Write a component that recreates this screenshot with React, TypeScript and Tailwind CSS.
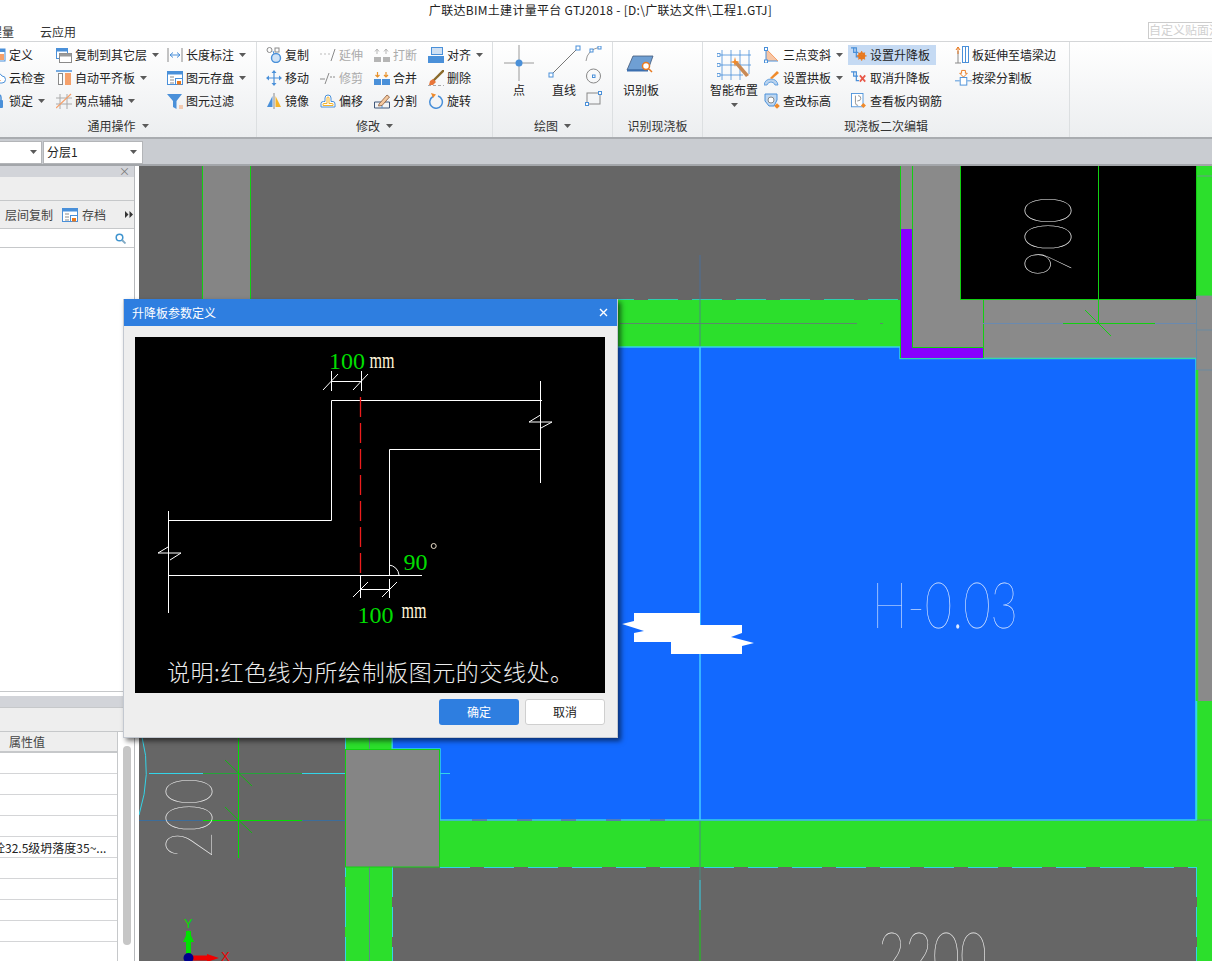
import React from "react";

const B = "#4a90d9";
const O = "#f5a06a";
const G = "#8a8a8a";

function S({ children, w = 16, h = 16, vb = "0 0 16 16", cls = "" }: { children: React.ReactNode; w?: number; h?: number; vb?: string; cls?: string }) {
  return (
    <svg width={w} height={h} viewBox={vb} fill="none" className={"shrink-0 " + cls}>
      {children}
    </svg>
  );
}

const Caret = ({ cls = "" }: { cls?: string }) => (
  <svg width="7" height="4" viewBox="0 0 7 4" className={"shrink-0 " + cls}>
    <path d="M0 0h7L3.5 4z" fill="#5a5a5a" />
  </svg>
);

const icons: Record<string, React.ReactNode> = {
  def: <S><rect x="1" y="2" width="14" height="12" fill="#fff" stroke={B} /><rect x="1" y="2" width="14" height="3" fill={B} /><rect x="9" y="7" width="5" height="6" fill={O} /></S>,
  cloud: <S><path d="M4 13a3 3 0 0 1-.5-6A4.5 4.5 0 0 1 12 6a3.5 3.5 0 0 1 0 7z" fill="#fff" stroke={B} /><path d="M8 6l3 5H5z" fill={O} /></S>,
  lock: <S><rect x="3" y="7" width="10" height="8" rx="1" fill={B} /><path d="M5 7V4.500a3 3 0 0 1 6 0V7" stroke={B} strokeWidth="1.500" /></S>,
  copyLayer: <S><rect x="0.500" y="1.500" width="11" height="10" fill="#fff" stroke={B} /><rect x="0.500" y="1.500" width="11" height="3" fill={B} /><rect x="3.500" y="6.500" width="12" height="9" fill="#fff" stroke={G} /><rect x="3.500" y="6.500" width="12" height="3" fill="#9a9a9a" /></S>,
  flush: <S><path d="M0 1h16" stroke={B} strokeWidth="1.500" /><rect x="2.500" y="3.500" width="4" height="11" fill="#fff" stroke={G} /><rect x="9" y="3" width="6" height="12" fill={O} /></S>,
  twoPt: <S><path d="M4 1v15M11 1v15M0 5h16M0 11h16" stroke="#aaa" /><path d="M0 15L15 1" stroke={O} strokeWidth="1.200" /></S>,
  length: <S><path d="M1 1v14M15 1v14" stroke={G} /><path d="M3 8h10M3 8l3-2.500M3 8l3 2.500M13 8l-3-2.500M13 8l-3 2.500" stroke={B} /></S>,
  saveEl: <S><rect x="0.500" y="1.500" width="15" height="13" fill="#fff" stroke={B} /><rect x="0.500" y="1.500" width="15" height="3" fill={B} /><path d="M3 7h4M3 10h4M3 13h4" stroke={G} /><rect x="8.500" y="8.500" width="7" height="6" fill="#fff" stroke={B} /><rect x="10" y="11" width="4" height="3.500" fill="#e8791f" /></S>,
  filter: <S><path d="M0 1h15L9.500 8v8L6 14V8z" fill={B} /><path d="M12 13h4M12 15h4" stroke={O} /></S>,
  copy: <S><circle cx="3.500" cy="3" r="2.500" stroke={G} /><rect x="9" y="1" width="4" height="4" stroke={G} /><circle cx="10" cy="11" r="4.500" fill="#cfe2f6" stroke={B} strokeWidth="1.400" /><path d="M7 4l1 3" stroke={B} /></S>,
  move: <S><path d="M8 1v14M1 8h14" stroke={B} strokeWidth="1.200" /><path d="M8 0l2.500 3h-5zM8 16l2.500-3h-5zM0 8l3-2.500v5zM16 8l-3-2.500v5z" fill={B} /></S>,
  mirror: <S><path d="M1 14L6.500 3v11z" fill={B} /><path d="M8 0v16" stroke={G} /><path d="M9.500 3L15 14H9.500z" fill="#f5b42a" /></S>,
  extend: <S><path d="M0 7h2M4 7h2M8 7h2" stroke="#bbb" /><path d="M11 14L15 2" stroke={G} /></S>,
  trim: <S><path d="M0 9h5M10 7h2M13 7h2" stroke={G} /><path d="M5 14L9 3" stroke={G} /></S>,
  offset: <S><path d="M1 14V10.500Q1 8.500 3.500 8.500H5V5Q5 2 8 2T11 5V8.500H13Q15 8.500 15 11V14z" fill="#fff" stroke={B} /><path d="M3 12.500V11Q3 10.500 4 10.500H7V5Q7 4 8 4T9 5V10.500H12.500Q13 10.500 13 11V12.500z" stroke="#f5b42a" /></S>,
  break: <S><rect x="0" y="10" width="7" height="5" fill="#b5b5b5" /><rect x="9" y="10" width="7" height="5" fill="#b5b5b5" /><path d="M3 2v5M1 4.500l2-2.500 2 2.500M12 2v5M10 4.500l2-2.500 2 2.500" stroke="#b5b5b5" /></S>,
  merge: <S><rect x="0" y="9" width="7" height="6" fill={B} /><rect x="8" y="9" width="8" height="6" fill={B} /><path d="M3.500 2v5M1.500 5l2 2 2-2M12 2v5M10 5l2 2 2-2" stroke="#e8912a" strokeWidth="1.200" /></S>,
  split: <S><path d="M0.500 15V9H15.500V15z" stroke="#41587a" /><path d="M8 15V12" stroke={B} /><path d="M5 11L13 2l2.500 2L8 12.500 4.500 13z" fill="#f4c9a0" stroke="#8a5a3a" strokeWidth=".8" /></S>,
  align: <S w={16} h={16}><rect x="3.500" y="0.500" width="11" height="7" fill="#cfe0f3" stroke={B} /><rect x="0" y="9" width="16" height="7" fill={B} /></S>,
  del: <S><path d="M16 0L5 11" stroke="#8a6a2a" strokeWidth="2.400" /><path d="M2 11l3-2 3 3-3 3H1z" fill="#e8763a" /><path d="M0 16h16" stroke="#333" strokeWidth=".8" strokeDasharray="3 2" /></S>,
  rotate: <S><path d="M5 3.500A6.300 6.300 0 1 0 10 3" stroke={B} strokeWidth="1.500" /><path d="M3 0l5 1.500-3 3.500z" fill="#f08a2a" /></S>,
  slope: <S><path d="M2 1v13h12z" fill="#f7c6a5" /><path d="M2 2v12h12" stroke={B} /><path d="M2 2l12 12" stroke={O} /><rect x="0.500" y="0.500" width="3" height="3" fill="#fff" stroke={B} /><rect x="0.500" y="13" width="3" height="3" fill="#fff" stroke={B} /></S>,
  arch: <S><path d="M0 15Q1 9 7 9T14 15H11Q10 12 7 12T3 15z" fill="#b8d2ee" stroke={B} strokeWidth=".8" /><path d="M6 8L13 1l2 2-7 6z" fill="#f08a2a" /></S>,
  check: <S><path d="M1 1h12v6L10 13H5L1 8z" fill="#bcd6f1" stroke={B} /><circle cx="7" cy="7" r="3" fill="#fff" stroke={G} /><rect x="11" y="11" width="4" height="4" fill="#f08a2a" transform="rotate(45 13 13)" /></S>,
  raise: <S w={16} h={16} vb="0 0 18 18"><path d="M0 1h3v5h3v5h3" stroke={B} strokeWidth="1.400" /><path d="M3 1h3v5h2" stroke={B} strokeWidth="1.400" /><circle cx="12" cy="10" r="4" fill="#e8791f" /><circle cx="12" cy="10" r="1.500" fill="#fff" /><path d="M12 4.500v11M6.500 10h11M8.200 6.200l7.600 7.600M15.800 6.200l-7.600 7.600" stroke="#e8791f" strokeWidth="1.200" /></S>,
  cancel: <S w={16} h={16} vb="0 0 18 18"><path d="M0 2h3v5h3v5h3" stroke={B} strokeWidth="1.400" /><path d="M3 2h3v5h2" stroke={B} strokeWidth="1.400" /><path d="M10 6l6 7M16 6l-6 7" stroke="#e8594a" strokeWidth="2" /></S>,
  rebar: <S w={16} h={16} vb="0 0 18 18"><rect x="0.500" y="0.500" width="13" height="15" fill="#fff" stroke={B} /><path d="M5 3v8q0 3 3 3M8 3q3 0 3 3T7 9" stroke={G} /><rect x="12" y="12" width="4" height="4" fill="#f08a2a" transform="rotate(45 14 14)" /></S>,
  extendWall: <S w={14} h={18} vb="0 0 14 18"><path d="M3 5v12M0 17h6" stroke={G} /><path d="M3 1v7M1 4l2-3 2 3" stroke="#e8791f" /><rect x="7.500" y="0.500" width="6" height="16" fill="#fff" stroke={B} /><path d="M10.500 1v15" stroke={B} /></S>,
  splitBeam: <S w={17} h={18} vb="0 0 18 18"><path d="M0 12h5M13 12h5" stroke={B} /><rect x="5.500" y="8.500" width="7" height="8" fill="#fff" stroke={B} /><path d="M7 1h4v3h2l-4 4-4-4h2z" fill="#fff" stroke="#e8791f" /></S>,
};

function Item({ icon, text, caret, off, hl, inner = "" }: { icon: string; text: string; caret?: boolean; off?: boolean; hl?: boolean; inner?: string }) {
  return (
    <div className="flex items-center h-[23px]">
      <div className={"flex items-center h-[20px] gap-[3px] whitespace-nowrap " + inner + (hl ? " bg-[#c5daf3]" : "")}>
        {icons[icon]}
        <span className={off ? "text-[#ababab]" : "text-[#222222]"}>{text}</span>
        {caret && <Caret cls="ml-[2px]" />}
      </div>
    </div>
  );
}

function Group({ cls, label, caret, children }: { cls: string; label: string; caret?: boolean; children: React.ReactNode }) {
  return (
    <div className={"flex flex-col shrink-0 h-full border-r border-[#dcdfe1] " + cls}>
      <div className="flex h-[74px] pt-[1px]">{children}</div>
      <div className="flex items-center justify-center gap-[6px] h-[20px] text-[#333333]">
        <span>{label}</span>
        {caret && <Caret />}
      </div>
    </div>
  );
}

function Ribbon() {
  return (
    <div className="flex h-[98px] -ml-[20px] w-[1232px] text-[12px] bg-gradient-to-b from-white to-[#eceef0] border-t border-[#d4d6d8] border-b-2 border-b-[#a9acb0] shrink-0">
      <Group cls="w-[277px]" label="通用操作" caret>
        <div className="w-[76px] pl-[10px]">
          <Item icon="def" text="定义" />
          <Item icon="cloud" text="云检查" />
          <Item icon="lock" text="锁定" caret />
        </div>
        <div className="w-[111px]">
          <Item icon="copyLayer" text="复制到其它层" caret />
          <Item icon="flush" text="自动平齐板" caret />
          <Item icon="twoPt" text="两点辅轴" caret />
        </div>
        <div>
          <Item icon="length" text="长度标注" caret />
          <Item icon="saveEl" text="图元存盘" caret />
          <Item icon="filter" text="图元过滤" />
        </div>
      </Group>
      <Group cls="w-[236px]" label="修改" caret>
        <div className="w-[63px] pl-[9px]">
          <Item icon="copy" text="复制" />
          <Item icon="move" text="移动" />
          <Item icon="mirror" text="镜像" />
        </div>
        <div className="w-[54px]">
          <Item icon="extend" text="延伸" off />
          <Item icon="trim" text="修剪" off />
          <Item icon="offset" text="偏移" />
        </div>
        <div className="w-[54px]">
          <Item icon="break" text="打断" off />
          <Item icon="merge" text="合并" />
          <Item icon="split" text="分割" />
        </div>
        <div>
          <Item icon="align" text="对齐" caret />
          <Item icon="del" text="删除" />
          <Item icon="rotate" text="旋转" />
        </div>
      </Group>
      <Group cls="w-[120px]" label="绘图" caret>
        <div className="w-[52px] flex flex-col items-center pt-[2px]">
          <S w={30} h={36} vb="0 0 30 36">
            <path d="M15 0v36M0 18h30" stroke="#9a9a9a" />
            <circle cx="15" cy="18" r="3.500" fill={B} />
          </S>
          <span className="-mt-[1px] h-[20px] leading-[20px] text-[#222222]">点</span>
        </div>
        <div className="w-[38px] flex flex-col items-center pt-[2px]">
          <S w={33} h={36} vb="0 0 33 36">
            <path d="M3 30L30 3" stroke="#777777" />
            <rect x="1" y="28" width="4" height="4" fill="#fff" stroke={B} />
            <rect x="28" y="1" width="4" height="4" fill="#fff" stroke={B} />
          </S>
          <span className="-mt-[1px] h-[20px] leading-[20px] text-[#222222]">直线</span>
        </div>
        <div className="flex flex-col ml-[2px] gap-[6px] pt-[3px]">
          <S w={17} h={16} vb="0 0 17 16">
            <path d="M1 15Q2 4 15 1" stroke="#999" />
            <rect x="5" y="3" width="3" height="3" fill="#fff" stroke={B} />
            <rect x="13" y="0" width="3" height="3" fill="#fff" stroke={B} />
          </S>
          <S w={17} h={16} vb="0 0 17 16">
            <circle cx="8.500" cy="8" r="7" stroke="#888" />
            <rect x="7.500" y="7" width="2.500" height="2.500" fill="#fff" stroke={B} />
          </S>
          <S w={17} h={16} vb="0 0 17 16">
            <rect x="2" y="3" width="13" height="11" stroke="#888" />
            <rect x="0.500" y="12.500" width="3" height="3" fill="#fff" stroke={B} />
            <rect x="13.500" y="1.500" width="3" height="3" fill="#fff" stroke={B} />
          </S>
        </div>
      </Group>
      <Group cls="w-[90px]" label="识别现浇板">
        <div className="w-[56px] flex flex-col items-center pt-[2px]">
          <S w={30} h={36} vb="0 0 30 36">
            <path d="M7 11h20l-5 14H1z" fill="#6f9fd3" stroke="#41587a" strokeWidth=".8" />
            <path d="M1 25.500h21" stroke="#3b6fb0" strokeWidth="2" />
            <circle cx="20" cy="21" r="3.500" fill="#fff" stroke="#e8791f" strokeWidth="1.500" />
            <path d="M23 24l3 3" stroke="#e8791f" strokeWidth="1.500" />
          </S>
          <span className="-mt-[1px] h-[20px] leading-[20px] text-[#222222]">识别板</span>
        </div>
      </Group>
      <Group cls="w-[367px]" label="现浇板二次编辑">
        <div className="ml-[7px] w-[48px] flex flex-col items-center pt-[2px]">
          <S w={34} h={36} vb="0 0 34 36">
            <path d="M5 5v30M14 5v30M23 5v30M32 5v24M0 10h34M0 20h34M0 30h26" stroke={B} strokeWidth=".8" />
            <path d="M17 18L29 32l3-2L20 16z" fill="#c98a55" />
            <path d="M17 16l1-4 1 4 4 1-4 1-1 4-1-4-4-1z" fill="#f08a2a" />
            <rect x="0" y="8.500" width="3" height="3" fill="#fff" stroke={B} strokeWidth=".8" />
            <rect x="0" y="18.500" width="3" height="3" fill="#fff" stroke={B} strokeWidth=".8" />
            <rect x="0" y="28.500" width="3" height="3" fill="#fff" stroke={B} strokeWidth=".8" />
          </S>
          <span className="-mt-[1px] h-[20px] leading-[20px] whitespace-nowrap text-[#222222]">智能布置</span>
          <Caret cls="mt-[3px]" />
        </div>
        <div className="w-[84px] ml-[6px]">
          <Item icon="slope" text="三点变斜" caret />
          <Item icon="arch" text="设置拱板" caret />
          <Item icon="check" text="查改标高" />
        </div>
        <div className="w-[107px]">
          <Item icon="raise" text="设置升降板" hl inner="pl-[3px] pr-[6px]" />
          <Item icon="cancel" text="取消升降板" inner="pl-[3px]" />
          <Item icon="rebar" text="查看板内钢筋" inner="pl-[3px]" />
        </div>
        <div>
          <Item icon="extendWall" text="板延伸至墙梁边" />
          <Item icon="splitBeam" text="按梁分割板" inner="!gap-0" />
        </div>
      </Group>
    </div>
  );
}

function Selects() {
  return (
    <div className="flex items-center gap-[1px] h-[27px] bg-[#c9ccd1] border-b-2 border-b-[#a3a6aa] text-[12px] pt-[1px] shrink-0">
      <div className="flex items-center justify-end w-[42px] h-[23px] bg-white border border-l-0 border-[#b3b5b8] pr-[4px]">
        <Caret />
      </div>
      <div className="flex items-center justify-between w-[100px] h-[23px] bg-white border border-[#b3b5b8] px-[3px] pr-[5px] text-[#222222]">
        <span>分层1</span>
        <Caret />
      </div>
    </div>
  );
}

function LeftPanel() {
  return (
    <div className="flex flex-col w-[139px] shrink-0 h-full bg-white text-[12px]">
      <div className="flex flex-col w-[135px] h-full border-r border-[#b7b9bc]">
        <div className="flex items-center justify-end h-[11px] bg-[#d2d4d9] pr-[4px] text-[#777777] text-[11px] leading-none">
          ×
        </div>
        <div className="h-[24px] bg-[#eeeeee] border-b border-[#c6c8ca]" />
        <div className="flex items-center h-[28px] bg-[#eeeeee] border-b border-[#c6c8ca] pl-[5px] text-[#444444] whitespace-nowrap">
          <span>层间复制</span>
          <span className="ml-[9px] mr-[4px]">{icons.saveEl}</span>
          <span>存档</span>
          <svg width="8" height="7" viewBox="0 0 8 7" className="ml-[19px]"><path d="M0 0l3.500 3.500L0 7zM4.500 0L8 3.500 4.500 7z" fill="#333" /></svg>
        </div>
        <div className="flex items-center justify-end h-[19px] border-b border-[#c6c8ca] pr-[8px]">
          <svg width="11" height="11" viewBox="0 0 11 11"><circle cx="4.500" cy="4.500" r="3.300" stroke="#3f94cf" strokeWidth="1.500" fill="none" /><path d="M7 7l3.500 3.500" stroke="#7fa9c4" strokeWidth="1.800" /></svg>
        </div>
        <div className="flex-1 border-b border-[#c6c8ca]" />
        <div className="h-[4px]" />
        <div className="h-[12px] bg-[#d2d4d9] border-b border-[#c6c8ca]" />
        <div className="h-[24px] bg-[#eeeeee] border-b border-[#c6c8ca]" />
        <div className="flex h-[229px] overflow-hidden">
          <div className="w-[118px] border-r border-[#c6c8ca]">
            <div className="flex items-center h-[21px] bg-[#eeeeee] border-b-2 border-[#c6c8ca] pl-[9px] text-[#444444]">属性值</div>
            {Array.from({ length: 10 }).map((_, i) => (
              <div key={i} className="h-[21px] border-b border-[#d4d5d7] leading-[22px] whitespace-nowrap text-[#222222] -indent-[7px] overflow-hidden">
                {i === 4 ? "砼32.5级坍落度35~..." : ""}
              </div>
            ))}
          </div>
          <div className="flex-1 pl-[5px] pt-[14px]">
            <div className="w-[8px] h-[199px] bg-[#c6c6c6] rounded-[4px]" />
          </div>
        </div>
      </div>
    </div>
  );
}

const thin = { fontFamily: "Lato, Roboto, 'Liberation Sans', sans-serif", fontWeight: 100 } as const;

function Canvas() {
  const green = "#2cdf2c";
  const line = "#12d012";
  const cyan = "#33d4e8";
  return (
    <svg width="1073" height="795" viewBox="139 166 1073 795" fill="none" className="block shrink-0">
      <rect x="139" y="166" width="1073" height="795" fill="#666666" />
      {/* left column */}
      <rect x="203" y="166" width="47" height="135" fill="#858585" />
      <path d="M202.500 166V300M250.500 166V300" stroke={line} />
      {/* top band */}
      <rect x="560" y="300" width="340" height="47" fill={green} />
      <path d="M560 299.500H900" stroke="#2ccfb0" strokeDasharray="30 14" />
      <path d="M620 323.500H857M880 323.500h3M906 323.500h5" stroke="#5a8a6a" />
      {/* upper right gray */}
      <rect x="900" y="166" width="296" height="192" fill="#8a8a8a" />
      <path d="M700 255V299" stroke="#4d6f96" />
      <path d="M700 299V347" stroke="#4a8a80" />
      {/* blue */}
      <path d="M392 347H900V358.500H1196V820H440V749H392z" fill="#1269ff" stroke={cyan} strokeWidth="1.500" />
      <path d="M700 347V820" stroke="#44ccff" strokeWidth="1.500" />
      {/* purple */}
      <path d="M901 229H912V347H983V358H901z" fill="#8800ff" />
      <path d="M900.500 166V358.500M912.500 166V347.500H983M983.500 300V358.500" stroke={line} />
      <path d="M900 358.500H1196" stroke="#35d8a8" />
      {/* black */}
      <rect x="960.500" y="160" width="236" height="139.500" fill="#000" stroke={line} />
      <path d="M983 323.500H1196" stroke="#6a8ab0" />
      <path d="M1098.500 166V323.500M1063 323.500H1155M1085 310L1111 336" stroke={line} />
      <text transform="translate(1071 277) rotate(-90)" fontSize="66" textLength="80" lengthAdjust="spacingAndGlyphs" fill="#eeeeee" style={thin}>900</text>
      {/* right strip */}
      <rect x="1197" y="166" width="15" height="130" fill={green} />
      <path d="M1197 176H1212M1197 296H1212" stroke="#6a9a8a" />
      <rect x="1197" y="296" width="15" height="405" fill="#8a8a8a" />
      <path d="M1196.500 296V370M1197 330H1212M1197 370H1212" stroke="#6a8aa0" />
      <path d="M1197 370V701" stroke={green} strokeWidth="2.500" />
      <rect x="1197" y="701" width="15" height="260" fill={green} />
      <path d="M1197 820H1212" stroke="#5a8a8a" />
      <path d="M1196.500 701V820" stroke={cyan} strokeWidth="1.500" />
      {/* bottom band */}
      <rect x="440" y="821" width="757" height="46" fill={green} />
      <rect x="345" y="737" width="47" height="224" fill={green} />
      <path d="M369.500 737V961" stroke="#5a8a8a" />
      <path d="M392 737V749" stroke={cyan} />
      <path d="M345.500 737V961" stroke={cyan} strokeDasharray="40 10" />
      <path d="M392.500 867V961" stroke={cyan} strokeDasharray="30 10" />
      <path d="M1196.500 867V961" stroke={cyan} strokeDasharray="30 10" />
      <path d="M440 867.500H1196" stroke={cyan} strokeDasharray="30 14" />
      <path d="M440 773.500H450" stroke={cyan} />
      <path d="M472 820H487M517 820H532M561 820H576M606 820H621M650 820H665" stroke="#5e6aa8" strokeWidth="1.500" />
      <path d="M700 821V880" stroke="#4a8a80" />
      <path d="M700 880V910" stroke={cyan} />
      <path d="M700 910V961" stroke={line} />
      <rect x="345.500" y="749.500" width="94" height="117.500" fill="#858585" stroke={line} />
      {/* left CAD */}
      <path d="M142 737Q152 773 139 815" stroke={cyan} />
      <path d="M149 773.500H345" stroke={cyan} />
      <path d="M139 820.500H345" stroke="#3d6d9a" />
      <path d="M203 773.500H302" stroke="#23a43a" />
      <path d="M203 820.500H302M238.500 737V858" stroke="#00e000" />
      <path d="M225 760L252 786M225 807L252 833" stroke="#12b812" />
      <text transform="translate(212 858) rotate(-90)" fontSize="66" textLength="80" lengthAdjust="spacingAndGlyphs" fill="#eeeeee" style={thin}>200</text>
      {/* labels */}
      <text x="872" y="628" fontSize="64" textLength="146" lengthAdjust="spacingAndGlyphs" fill="#dfeaff" style={thin}>H-0.03</text>
      <text x="878" y="978" fontSize="64" textLength="109" lengthAdjust="spacingAndGlyphs" fill="#eeeeee" style={thin}>2200</text>
      {/* white blob */}
      <path d="M634 613H700V625H742V633L731 637L754 643L742 646V654H671V642H634V633L644 631L622 624L634 621z" fill="#fff" />
      {/* axes */}
      <path d="M188.500 931V958" stroke="#00e000" strokeWidth="5" />
      <path d="M188.500 930L194 942H183z" fill="#00e000" />
      <path d="M188 958H208" stroke="#ee0000" strokeWidth="5" />
      <path d="M207 954L219 958L207 962z" fill="#ee0000" />
      <circle cx="188.500" cy="958" r="5" fill="#00008c" />
      <text x="184" y="928" fontSize="13" fill="#00e000" fontFamily="'Liberation Sans', sans-serif">Y</text>
      <text x="221" y="961" fontSize="13" fill="#ee0000" fontFamily="'Liberation Sans', sans-serif">X</text>
    </svg>
  );
}

function Dialog() {
  const w = "#ffffff";
  return (
    <div className="absolute left-[123px] top-[299px] w-[495px] h-[439px] bg-[#eeeeee] border border-[#c3c8d0] border-t-0 shadow-[3px_3px_5px_rgba(0,0,0,0.55)] text-[12px]">
      <div className="flex items-center justify-between h-[27px] bg-[#2e7ee0] text-white pl-[8px] pr-[9px]">
        <span>升降板参数定义</span>
        <svg width="9" height="9" viewBox="0 0 9 9"><path d="M1 1l7 7M8 1L1 8" stroke="#fff" strokeWidth="1.400" /></svg>
      </div>
      <div className="px-[11px] pt-[11px]">
        <svg width="470" height="356" viewBox="135 337 470 356" fill="none" className="block bg-black" fontFamily="'Liberation Serif', serif">
          <path d="M168.500 520.500H331.500V400.500H542M540.500 381V483M389.500 575V449.500H540M168.500 511V613M168.500 575.500H422" stroke={w} />
          <path d="M331.500 371V391M361.500 371V391M331 381.500H361M323 390L338 374M353 390L368 374" stroke={w} />
          <path d="M360.500 575V598M389.500 579V598M360 589.500H375M375 589.500H389M353 597L368 582M382 597L397 582" stroke={w} />
          <path d="M540.500 415L529 422H552L541 428M168 547L158 553H181L170 560" stroke={w} />
          <path d="M389 565A11 11 0 0 1 399 575" stroke={w} />
          <path d="M360.500 397V578" stroke="#ee1c1c" strokeWidth="1.300" strokeDasharray="20 6" />
          <circle cx="433.700" cy="546" r="2.500" stroke="#e8dcc8" />
          <text x="329" y="369" fontSize="24" fill="#00dd00">100</text>
          <text x="369.500" y="368" fontSize="24" textLength="25" lengthAdjust="spacingAndGlyphs" fill="#fff4d8">mm</text>
          <text x="403.500" y="570" fontSize="24" fill="#00dd00">90</text>
          <text x="357.500" y="623" fontSize="24" fill="#00dd00">100</text>
          <text x="401.500" y="618" fontSize="24" textLength="25" lengthAdjust="spacingAndGlyphs" fill="#fff4d8">mm</text>
          <text x="167" y="681" fontSize="23" textLength="406" lengthAdjust="spacing" fill="#ececec" fontWeight="300" fontFamily="'Noto Sans CJK SC', sans-serif">说明:红色线为所绘制板图元的交线处。</text>
        </svg>
      </div>
      <div className="flex justify-end gap-[6px] pr-[12px] pt-[6px]">
        <button className="w-[80px] h-[26px] rounded-[3px] bg-[#2e7ee0] text-white">确定</button>
        <button className="w-[80px] h-[26px] rounded-[3px] bg-white border border-[#cfcfcf] text-[#222222]">取消</button>
      </div>
    </div>
  );
}

export default function App() {
  return (
    <div className="relative w-[1212px] h-[961px] overflow-hidden bg-white flex flex-col font-['Noto_Sans_CJK_SC','Liberation_Sans',sans-serif]">
      <div className="flex items-center justify-center h-[20px] pr-[11px] text-[12px] tracking-[0.3px] text-[#222222] shrink-0 whitespace-nowrap">
        广联达BIM土建计量平台 GTJ2018 - [D:\广联达文件\工程1.GTJ]
      </div>
      <div className="flex items-center gap-[26px] h-[21px] -ml-[22px] pt-[2px] text-[12px] text-[#333333] shrink-0">
        <span>工程量</span>
        <span>云应用</span>
      </div>
      <div className="absolute left-[1148px] top-[22px] w-[70px] h-[17px] border border-[#cccccc] text-[12px] leading-[14px] text-[#d0d0d0] overflow-hidden whitespace-nowrap">
        自定义贴面流
      </div>
      <Ribbon />
      <Selects />
      <div className="flex flex-1 min-h-0">
        <LeftPanel />
        <Canvas />
      </div>
      <Dialog />
    </div>
  );
}
